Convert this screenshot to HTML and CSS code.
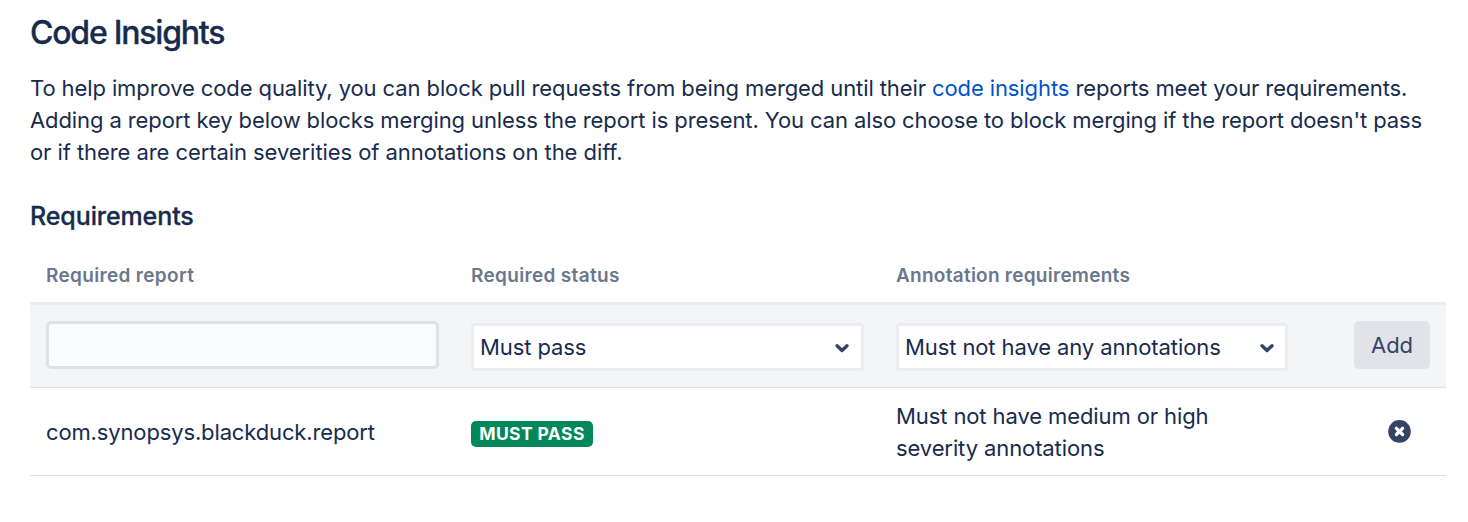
FILE: index.html
```html
<!DOCTYPE html>
<html lang="en">
<head>
<meta charset="utf-8">
<title>Code Insights</title>
<link rel="stylesheet" href="styles.css">
</head>
<body>
<main class="page">
  <h1 class="title">Code Insights</h1>
  <p class="intro">To help improve code quality, you can block pull requests from being merged until their <a class="link">code insights</a> reports meet your requirements.<br>Adding a report key below blocks merging unless the report is present. You can also choose to block merging if the report doesn't pass<br><span class="last-line">or if there are certain severities of annotations on the diff.</span></p>
  <h2 class="subtitle">Requirements</h2>
  <section class="table">
    <div class="row head"><div>Required report</div><div>Required status</div><div class="head-anno">Annotation requirements</div><div></div></div>
    <div class="row form">
      <div><div class="input"></div></div>
      <div><div class="select select-status">Must pass<svg class="chev" viewBox="0 0 16 12"><path d="M3 3.7 L8 8.5 L13 3.7"/></svg></div></div>
      <div><div class="select">Must not have any annotations<svg class="chev" viewBox="0 0 16 12"><path d="M3 3.7 L8 8.5 L13 3.7"/></svg></div></div>
      <div class="action"><div class="button">Add</div></div>
    </div>
    <div class="row item">
      <div class="key">com.synopsys.blackduck.report</div>
      <div><span class="lozenge">MUST PASS</span></div>
      <div class="anno">Must not have medium or high<br>severity annotations</div>
      <div class="action"><svg class="remove" viewBox="0 0 24 24"><circle cx="12.5" cy="12.4" r="11.3"/><path d="M9.4 9.3 L15.6 15.5 M15.6 9.3 L9.4 15.5"/></svg></div>
    </div>
  </section>
</main>
</body>
</html>
```

FILE: styles.css
```css
* { box-sizing: border-box; }
body { margin: 0; background: #fff; color: #172b4d; font: 22px/32px Inter, sans-serif; letter-spacing: -.1px; }
.page { padding: 14px 22px 0 30px; white-space: nowrap; }
.title { margin: 0; font-size: 32px; line-height: 38px; font-weight: 500; letter-spacing: -1.22px; -webkit-text-stroke: .3px #172b4d; }
.intro { margin: 20px 0 0; }
.last-line { letter-spacing: -.07px; }
.link { color: #0052cc; }
.subtitle { margin: 32px 0 0; font-size: 25px; line-height: 32px; font-weight: 500; letter-spacing: -.1px; -webkit-text-stroke: .3px #172b4d; }
.row { display: grid; grid-template-columns: 425px 425px 424px 126px; padding-left: 16px; width: 1416px; }
.head { height: 73px; padding-top: 28px; border-bottom: 3px solid #ebecf0; color: #6b778c; font-size: 19px; font-weight: 600; letter-spacing: .33px; }
.head-anno { letter-spacing: .26px; }
.form { height: 83px; background: #f4f5f7; border-bottom: 1px solid #dfe1e6; padding-top: 16px; }
.input { width: 393px; height: 48px; background: #fafbfc; border: 3px solid #dfe1e4; border-radius: 5px; }
.select { display: flex; align-items: center; justify-content: space-between; margin-top: 2px; width: 392px; height: 48px; padding: 0 10px 0 6px; background: #fff; border: 3px solid #ebecf0; border-radius: 4px; }
.select-status { width: 393px; padding-right: 11px; }
.chev { width: 16px; height: 12px; margin-top: 1px; fill: none; stroke: #344563; stroke-width: 3.4; stroke-linecap: round; stroke-linejoin: round; }
.action { display: flex; justify-content: flex-end; padding-right: 16px; }
.button { width: 76px; height: 48px; line-height: 48px; text-align: center; border-radius: 5px; background: #e2e3e9; color: #344563; }
.item { height: 88px; border-bottom: 1px solid #dfe1e6; align-items: center; }
.key { letter-spacing: -.14px; }
.lozenge { display: block; width: 122px; height: 26px; margin-top: 5px; border-radius: 5px; background: #00875a; color: #fff; text-align: center; font-size: 17.5px; line-height: 26px; font-weight: 700; letter-spacing: .4px; }
.remove { width: 24px; height: 24px; margin: 0 19px 1px 0; fill: #344563; }
.remove path { stroke: #fff; stroke-width: 3.3; stroke-linecap: round; }
```
